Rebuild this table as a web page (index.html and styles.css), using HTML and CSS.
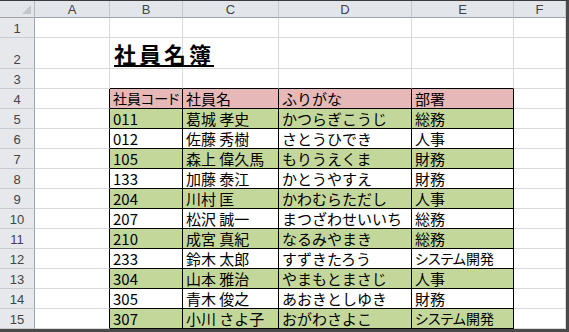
FILE: index.html
```html
<!DOCTYPE html>
<html lang="ja">
<head>
<meta charset="utf-8">
<title>社員名簿</title>
<link rel="stylesheet" href="styles.css">
</head>
<body>
<div class="sheet">
  <div class="corner"><span class="tri"></span></div>
  <div class="ch">A</div><div class="ch">B</div><div class="ch">C</div><div class="ch">D</div><div class="ch">E</div><div class="ch">F</div>

  <div class="rh">1</div><div class="c"></div><div class="c"></div><div class="c"></div><div class="c"></div><div class="c"></div><div class="c"></div>

  <div class="rh">2</div><div class="c"></div><div class="c title-cell"><span class="title">社員名簿</span></div><div class="c"></div><div class="c"></div><div class="c"></div><div class="c"></div>

  <div class="rh">3</div><div class="c"></div><div class="c above"></div><div class="c above"></div><div class="c above"></div><div class="c above"></div><div class="c"></div>

  <div class="rh">4</div><div class="c left"></div><div class="c t hd k">社員コード</div><div class="c t hd">社員名</div><div class="c t hd">ふりがな</div><div class="c t hd">部署</div><div class="c"></div>

  <div class="rh">5</div><div class="c left"></div><div class="c t g">011</div><div class="c t g">葛城 孝史</div><div class="c t g">かつらぎこうじ</div><div class="c t g">総務</div><div class="c"></div>

  <div class="rh">6</div><div class="c left"></div><div class="c t">012</div><div class="c t">佐藤 秀樹</div><div class="c t">さとうひでき</div><div class="c t">人事</div><div class="c"></div>

  <div class="rh">7</div><div class="c left"></div><div class="c t g">105</div><div class="c t g">森上 偉久馬</div><div class="c t g">もりうえくま</div><div class="c t g">財務</div><div class="c"></div>

  <div class="rh">8</div><div class="c left"></div><div class="c t">133</div><div class="c t">加藤 泰江</div><div class="c t">かとうやすえ</div><div class="c t">財務</div><div class="c"></div>

  <div class="rh">9</div><div class="c left"></div><div class="c t g">204</div><div class="c t g">川村 匡</div><div class="c t g">かわむらただし</div><div class="c t g">人事</div><div class="c"></div>

  <div class="rh">10</div><div class="c left"></div><div class="c t">207</div><div class="c t">松沢 誠一</div><div class="c t">まつざわせいいち</div><div class="c t">総務</div><div class="c"></div>

  <div class="rh">11</div><div class="c left"></div><div class="c t g">210</div><div class="c t g">成宮 真紀</div><div class="c t g">なるみやまき</div><div class="c t g">総務</div><div class="c"></div>

  <div class="rh">12</div><div class="c left"></div><div class="c t">233</div><div class="c t">鈴木 太郎</div><div class="c t">すずきたろう</div><div class="c t k">システム開発</div><div class="c"></div>

  <div class="rh">13</div><div class="c left"></div><div class="c t g">304</div><div class="c t g">山本 雅治</div><div class="c t g">やまもとまさじ</div><div class="c t g">人事</div><div class="c"></div>

  <div class="rh">14</div><div class="c left"></div><div class="c t">305</div><div class="c t">青木 俊之</div><div class="c t">あおきとしゆき</div><div class="c t">財務</div><div class="c"></div>

  <div class="rh">15</div><div class="c left"></div><div class="c t g">307</div><div class="c t g">小川 さよ子</div><div class="c t g">おがわさよこ</div><div class="c t g k">システム開発</div><div class="c"></div>
</div>
</body>
</html>
```
FILE: styles.css
```css
html, body {
  margin: 0;
  padding: 0;
  background: #ffffff;
}

.sheet {
  display: grid;
  grid-template-columns: 35px 75px 73px 96px 133px 102px 52px;
  grid-template-rows: 17px 20px 31px 20px repeat(12, 20px);
  border-top: 1px solid #3c3c3c;
  border-right: 3px solid #4a4a4a;
  border-bottom: 3px solid #4a4a4a;
  width: 566px;
  font-family: "Noto Sans CJK JP", "Liberation Sans", sans-serif;
  color: #111;
}

.corner {
  background: #e2e5ea;
  border-right: 1px solid #b4b9bf;
  border-bottom: 1px solid #9ea3aa;
  position: relative;
}

.tri {
  position: absolute;
  right: 3px;
  bottom: 3px;
  width: 0;
  height: 0;
  border-left: 9px solid transparent;
  border-bottom: 9px solid #c3c7cc;
}

.ch {
  background: #e2e5ea;
  border-right: 1px solid #c4c8cd;
  border-bottom: 1px solid #9ea3aa;
  display: flex;
  align-items: center;
  justify-content: center;
  font-family: "Liberation Sans", "Noto Sans CJK JP", sans-serif;
  font-size: 13px;
  color: #444;
  padding-top: 1px;
}

.rh {
  background: #e6e8ec;
  border-right: 1px solid #9ea3aa;
  border-bottom: 1px solid #c8ccd1;
  display: flex;
  align-items: flex-end;
  justify-content: center;
  font-family: "Liberation Sans", "Noto Sans CJK JP", sans-serif;
  font-size: 13px;
  color: #444;
  padding-bottom: 1px;
  box-sizing: border-box;
}

.c {
  border-right: 1px solid #dadada;
  border-bottom: 1px solid #dadada;
  box-sizing: border-box;
  display: flex;
  align-items: flex-end;
  padding: 0 0 0 3px;
  font-size: 15px;
  line-height: 19px;
  white-space: nowrap;
  overflow: visible;
}

.k {
  font-feature-settings: "palt" 1;
  font-size: 14px;
}

.left {
  border-right-color: #000;
}

.above {
  border-bottom-color: #000;
}

.t {
  border-right-color: #000;
  border-bottom-color: #000;
  color: #000;
}

.hd {
  background: #e6b8b7;
}

.g {
  background: #c4d79b;
}

.title-cell {
  padding-left: 4px;
  padding-bottom: 2px;
  position: relative;
  z-index: 1;
}

.title {
  font-size: 22px;
  font-weight: bold;
  letter-spacing: 3px;
  line-height: 26px;
  text-decoration: underline;
  text-decoration-thickness: 2px;
  text-underline-offset: 2px;
  color: #000;
}
```
